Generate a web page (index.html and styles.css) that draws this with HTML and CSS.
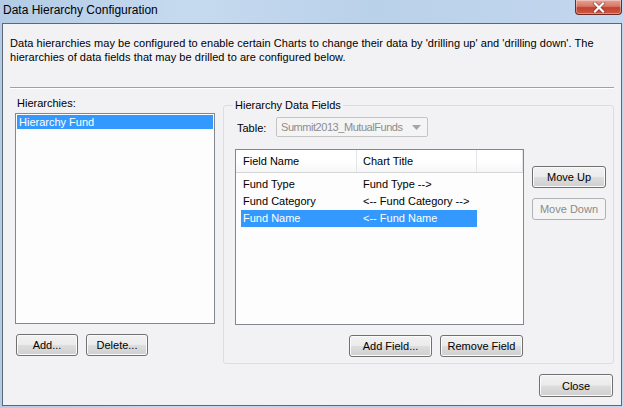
FILE: index.html
```html
<!DOCTYPE html>
<html>
<head>
<meta charset="utf-8">
<link rel="stylesheet" href="styles.css">
</head>
<body>
<div class="window">
  <div class="titlebar">
    <span class="title">Data Hierarchy Configuration</span>
    <div class="closebtn">
      <svg width="14" height="11" viewBox="0 0 14 11">
        <path d="M3 1.5 L11 9.5 M11 1.5 L3 9.5" stroke="#5a1e18" stroke-width="3.6" stroke-linecap="square" fill="none" opacity="0.55"/>
        <path d="M3 1.5 L11 9.5 M11 1.5 L3 9.5" stroke="#ffffff" stroke-width="2.2" stroke-linecap="square" fill="none"/>
      </svg>
    </div>
  </div>
  <div class="client">
    <p class="desc">Data hierarchies may be configured to enable certain Charts to change their data by 'drilling up' and 'drilling down'. The<br>hierarchies of data fields that may be drilled to are configured below.</p>
    <div class="sep"></div>
    <div class="main">
      <div class="left">
        <div class="label">Hierarchies:</div>
        <div class="listbox">
          <div class="lbitem selected">Hierarchy Fund</div>
        </div>
        <div class="btnrow">
          <button class="btn w62">Add...</button>
          <button class="btn w62">Delete...</button>
        </div>
      </div>
      <fieldset class="group">
        <legend>Hierarchy Data Fields</legend>
        <div class="tablerow">
          <span class="tlabel">Table:</span>
          <div class="combo">
            <span class="combotext">Summit2013_MutualFunds</span>
            <svg width="9" height="5" viewBox="0 0 9 5"><path d="M0 0 L9 0 L4.5 5 Z" fill="#a5a5a5"/></svg>
          </div>
        </div>
        <div class="lvrow">
          <div class="listview">
            <div class="lvheader">
              <div class="hcell c1">Field Name</div>
              <div class="hcell c2">Chart Title</div>
              <div class="hcell c3"></div>
            </div>
            <div class="lvbody">
              <div class="lvrowitem"><span class="r1">Fund Type</span><span class="r2">Fund Type --&gt;</span></div>
              <div class="lvrowitem"><span class="r1">Fund Category</span><span class="r2">&lt;-- Fund Category --&gt;</span></div>
              <div class="lvrowitem selected"><span class="r1">Fund Name</span><span class="r2">&lt;-- Fund Name</span></div>
            </div>
          </div>
          <div class="sidebtns">
            <button class="btn w74">Move Up</button>
            <button class="btn w74" disabled>Move Down</button>
          </div>
        </div>
        <div class="groupbtns">
          <button class="btn w83">Add Field...</button>
          <button class="btn w83">Remove Field</button>
        </div>
      </fieldset>
    </div>
    <div class="footer">
      <button class="btn w74 tall">Close</button>
    </div>
  </div>
</div>
</body>
</html>
```

FILE: styles.css
```css
* { box-sizing: border-box; }

body {
  margin: 0;
  font-family: "Liberation Sans", Arial, sans-serif;
  font-size: 11px;
  color: #000;
}

.window {
  width: 624px;
  height: 408px;
  background: linear-gradient(to right, #b3cbe5 0%, #c6daef 30%, #bad1ea 60%, #c3d7ee 100%);
  display: flex;
  flex-direction: column;
}

.titlebar {
  height: 23px;
  display: flex;
  justify-content: space-between;
  align-items: flex-start;
  padding: 0 2px 0 3px;
}

.title {
  font-size: 12px;
  line-height: 20px;
  color: #000;
}

.closebtn {
  width: 47px;
  height: 15px;
  background: linear-gradient(#e6a297 0%, #d77665 45%, #c2412f 55%, #cf5a44 100%);
  border: 1px solid #6f2a24;
  border-top: none;
  border-radius: 0 0 4px 4px;
  display: flex;
  align-items: center;
  justify-content: center;
  box-shadow: inset 0 0 0 1px rgba(255,255,255,0.35);
}

.client {
  flex: 1;
  margin: 0 2px 2px 2px;
  border: 1px solid #5b6876;
  background: #f2f1f4;
  display: flex;
  flex-direction: column;
}

.desc {
  margin: 0;
  padding: 12px 7px 0;
  line-height: 14px;
  letter-spacing: 0.05px;
}

.sep {
  margin: 23px 7px 0;
  height: 2px;
  border-top: 1px solid #a0a0a0;
  border-bottom: 1px solid #ffffff;
}

.main {
  display: flex;
  gap: 8px;
  padding: 0 7px 0 12px;
}

.left {
  width: 200px;
  padding-top: 7px;
  display: flex;
  flex-direction: column;
}

.label {
  line-height: 14px;
  padding-left: 2px;
}

.listbox {
  margin-top: 3px;
  height: 211px;
  border: 1px solid #828790;
  background: #fcfdfc;
  padding: 1px;
}

.lbitem {
  height: 14px;
  line-height: 14px;
  padding-left: 2px;
}

.selected {
  background: #3399ff;
  color: #fff;
}

.btnrow {
  margin-top: 10px;
  padding-left: 1px;
  display: flex;
  gap: 8px;
}

.btn {
  font-family: inherit;
  font-size: 11px;
  color: #000;
  height: 22px;
  padding: 0;
  border: 1px solid #707070;
  border-radius: 3px;
  background: linear-gradient(#f2f2f2 0%, #ebebeb 48%, #dddddd 52%, #cfcfcf 100%);
  box-shadow: inset 0 0 0 1px #fbfbfb;
}

.btn:disabled {
  color: #8b8b8b;
  border-color: #adb2b5;
  background: #f4f4f4;
  box-shadow: none;
}

.w62 { width: 62px; }
.w74 { width: 74px; }
.w83 { width: 83px; }
.tall { height: 23px; }

.group {
  margin: 9px 0 0 0;
  padding: 0 0 6px 0;
  min-width: 0;
  width: 391px;
  border: 1px solid #d5dfe5;
  border-radius: 3px;
}

.group legend {
  margin-left: 9px;
  padding: 0 2px;
  line-height: 14px;
}

.tablerow {
  display: flex;
  align-items: center;
  margin-top: 5px;
  padding-left: 13px;
}

.tlabel {
  width: 39px;
  padding-top: 2px;
}

.combo {
  width: 152px;
  height: 20px;
  border: 1px solid #c5c5c5;
  border-radius: 2px;
  background: #f4f4f4;
  color: #8d8d8d;
  display: flex;
  align-items: center;
  justify-content: space-between;
  padding: 0 6px 0 4px;
}

.combotext {
  letter-spacing: -0.45px;
}

.lvrow {
  display: flex;
  gap: 8px;
  margin-top: 12px;
  padding-left: 11px;
}

.listview {
  width: 289px;
  height: 176px;
  border: 1px solid #828790;
  background: #fcfdfc;
  display: flex;
  flex-direction: column;
}

.lvheader {
  height: 23px;
  display: flex;
  background: linear-gradient(#ffffff 0%, #ffffff 50%, #f5f6f7 100%);
  border-bottom: 1px solid #d5d5d5;
}

.hcell {
  line-height: 22px;
  border-right: 1px solid #e3e5e7;
}

.c1 { width: 121px; padding-left: 7px; }
.c2 { width: 120px; padding-left: 6px; }
.c3 { width: 46px; }

.lvbody {
  padding-top: 3px;
  padding-left: 5px;
}

.lvrowitem {
  width: 236px;
  height: 17px;
  line-height: 17px;
  display: flex;
}

.r1 { width: 116px; padding-left: 2px; }
.r2 { padding-left: 6px; }

.sidebtns {
  display: flex;
  flex-direction: column;
  gap: 10px;
  padding-top: 17px;
}

.groupbtns {
  display: flex;
  justify-content: flex-end;
  gap: 8px;
  margin-top: 10px;
  padding-left: 11px;
  width: 299px;
}

.footer {
  display: flex;
  justify-content: flex-end;
  padding: 10px 8px 0 0;
}
```
